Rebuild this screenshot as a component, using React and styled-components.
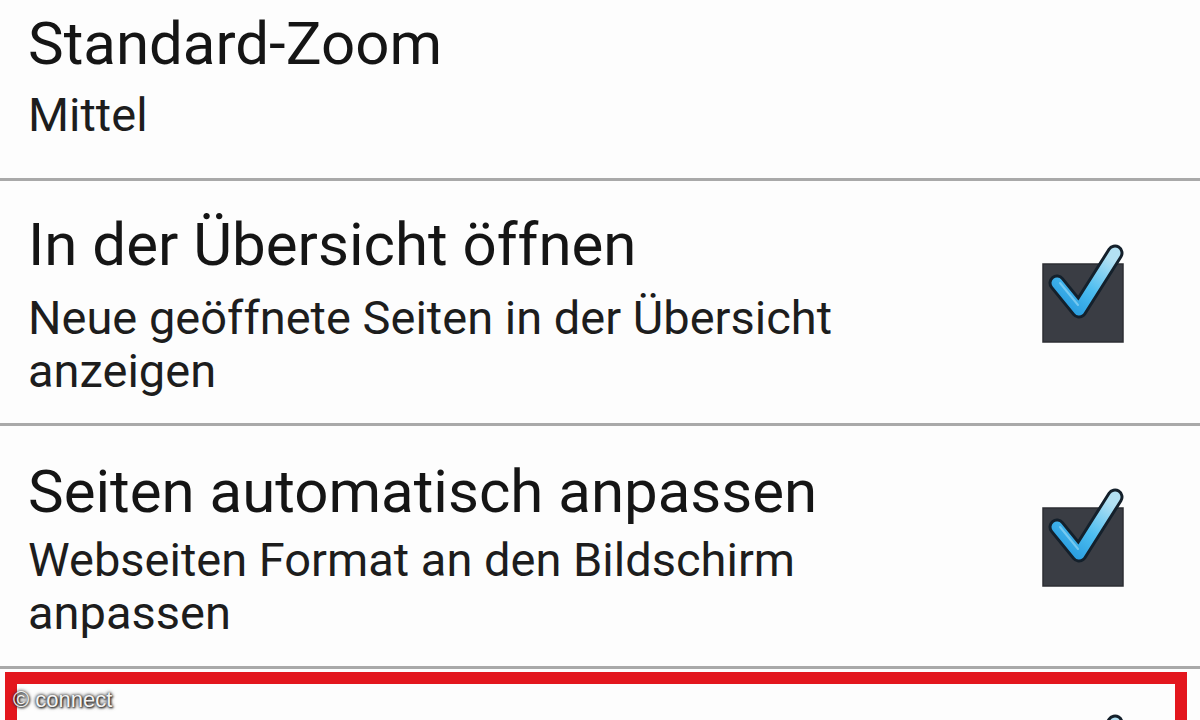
import React from 'react';
import styled, { createGlobalStyle } from 'styled-components';

const GlobalStyle = createGlobalStyle`
  html, body {
    margin: 0;
    padding: 0;
    background: #fff;
  }
  body {
    font-family: Roboto, "Noto Sans", "Liberation Sans", sans-serif;
    color: #161616;
  }
`;

const Screen = styled.div`
  position: relative;
  width: 1200px;
  height: 720px;
  overflow: hidden;
  background: #fdfdfd;
`;

const Row = styled.div`
  display: flex;
  align-items: center;
  box-sizing: border-box;
  min-height: ${({ $minHeight }) => $minHeight || 0}px;
  padding: ${({ $pt = 30 }) => $pt}px 75px ${({ $pb = 27 }) => $pb}px 28px;
  border-bottom: ${({ $last }) => ($last ? 'none' : '3px solid #a9a9a9')};
`;

const Texts = styled.div`
  flex: 1;
  display: flex;
  flex-direction: column;
  gap: ${({ $gap = 8 }) => $gap}px;
`;

const Title = styled.div`
  font-size: 60px;
  line-height: 70px;
  color: #151515;
`;

const Summary = styled.div`
  font-size: 47px;
  line-height: 53px;
  color: #1d1d1d;
`;

const CheckWrap = styled.div`
  flex-shrink: 0;
  width: 84px;
  height: 96px;
  margin-top: -16px;
  svg {
    display: block;
    overflow: visible;
  }
`;

const Marker = styled.div`
  position: absolute;
  left: 5px;
  top: 672px;
  width: 1182px;
  height: 120px;
  box-sizing: border-box;
  border: 12px solid #e3161d;
  pointer-events: none;
`;

const Watermark = styled.div`
  position: absolute;
  left: 13px;
  top: 687px;
  font-family: "Liberation Sans", Arial, sans-serif;
  font-size: 22px;
  color: #f4f4f4;
  text-shadow: 0 0 3px #222, 0 0 4px #444, 1px 1px 2px #222;
`;

function CheckBox({ id }) {
  return (
    <CheckWrap>
      <svg width="84" height="96" viewBox="0 0 84 96">
        <defs>
          <linearGradient id={`tick-${id}`} x1="0" y1="1" x2="0.8" y2="0">
            <stop offset="0" stopColor="#2196dc" />
            <stop offset="0.5" stopColor="#4cbdf0" />
            <stop offset="1" stopColor="#b3e1f3" />
          </linearGradient>
        </defs>
        <rect x="2" y="16" width="80" height="78" fill="#3a3d44" stroke="#2c2e33" strokeWidth="1.5" />
        <path
          d="M16 35 L38 62 L74 5"
          fill="none"
          stroke="#14202b"
          strokeWidth="17"
          strokeLinecap="round"
          strokeLinejoin="round"
        />
        <path
          d="M16 35 L38 62 L74 5"
          fill="none"
          stroke={`url(#tick-${id})`}
          strokeWidth="11"
          strokeLinecap="round"
          strokeLinejoin="round"
        />
        <path d="M19 35 L37 57" stroke="#8fd6f6" strokeWidth="2" strokeLinecap="round" opacity="0.7" />
      </svg>
    </CheckWrap>
  );
}

const rows = [
  { title: 'Standard-Zoom', summary: ['Mittel'], pt: 9, pb: 37, gap: 9 },
  {
    title: 'In der Übersicht öffnen',
    summary: ['Neue geöffnete Seiten in der Übersicht', 'anzeigen'],
    checked: true,
    pt: 29,
    pb: 26,
    gap: 11,
  },
  {
    title: 'Seiten automatisch anpassen',
    summary: ['Webseiten Format an den Bildschirm', 'anpassen'],
    checked: true,
    pt: 31,
    pb: 27,
    gap: 6,
  },
];

export default function App() {
  return (
    <>
      <GlobalStyle />
      <Screen>
        {rows.map((row, idx) => (
          <Row key={idx} $pt={row.pt} $pb={row.pb}>
            <Texts $gap={row.gap}>
              <Title>{row.title}</Title>
              <Summary>
                {row.summary.map((line, i) => (
                  <div key={i}>{line}</div>
                ))}
              </Summary>
            </Texts>
            {row.checked && <CheckBox id={idx} />}
          </Row>
        ))}
        <Row $last $pt={0} $pb={0} $minHeight={210}>
          <Texts />
          <CheckBox id="next" />
        </Row>
        <Marker />
        <Watermark>© connect</Watermark>
      </Screen>
    </>
  );
}
